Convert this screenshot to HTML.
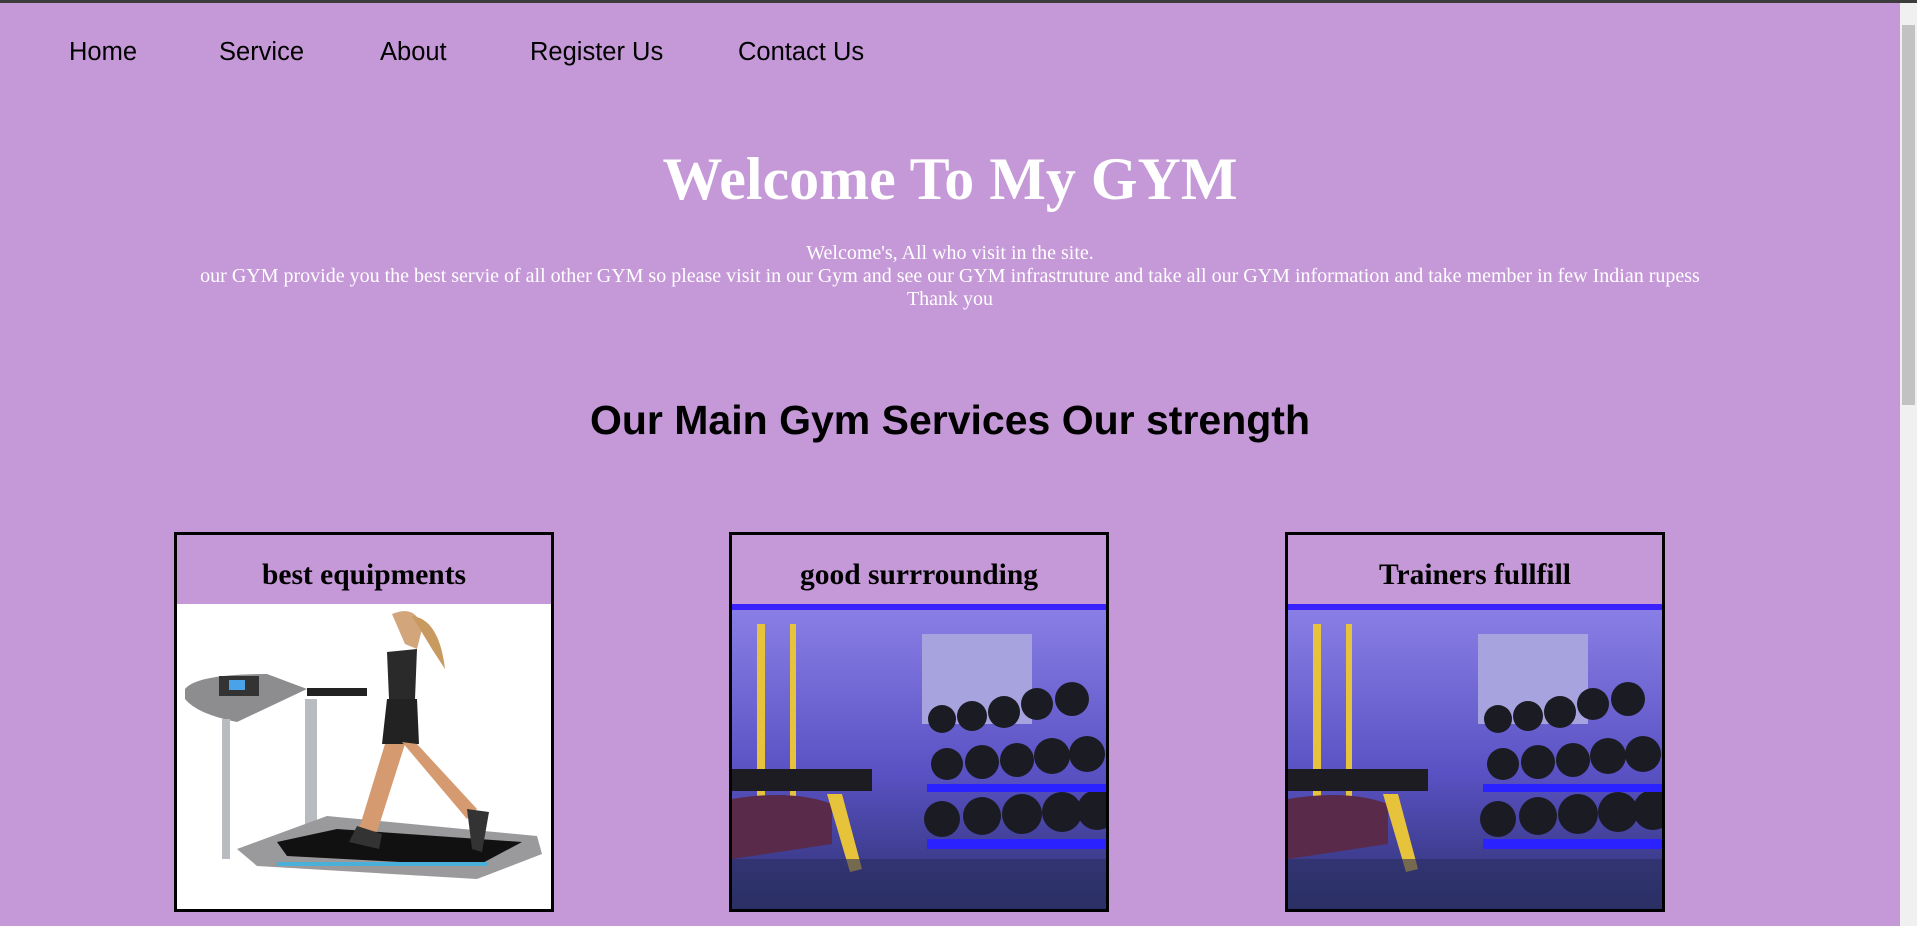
<!DOCTYPE html>
<html><head><meta charset="utf-8"><style>
html,body{margin:0;padding:0;}
body{width:1917px;height:926px;overflow:hidden;background:#c598d7;position:relative;font-family:"Liberation Sans",sans-serif;}
.topbar{position:absolute;left:0;top:0;width:1917px;height:3px;background:#3c3c3c;}
.sb{position:absolute;right:0;top:3px;width:17px;height:923px;background:#f0f0f0;}
.sb .th{position:absolute;left:2px;top:22px;width:13px;height:380px;background:#c2c2c2;}
.nav{position:absolute;top:38px;font-size:25.5px;color:#000;}
h1{position:absolute;left:0;width:1900px;top:145px;margin:0;text-align:center;font-family:"Liberation Serif",serif;font-weight:bold;font-size:60px;color:#fff;}
.p{position:absolute;left:0;width:1900px;top:242px;text-align:center;font-family:"Liberation Serif",serif;font-size:20px;line-height:23px;color:#fff;}
h2{position:absolute;left:0;width:1900px;top:397px;margin:0;text-align:center;font-weight:bold;font-size:41px;color:#000;}
.card{position:absolute;top:532px;width:374px;height:374px;border:3px solid #000;}
.card .t{height:69px;text-align:center;font-family:"Liberation Serif",serif;font-weight:bold;font-size:29.5px;line-height:80px;color:#000;}
.card svg{display:block;width:374px;height:305px;}
</style></head><body>
<div class="topbar"></div>
<div class="sb"><div class="th"></div></div>
<div class="nav" style="left:69px">Home</div>
<div class="nav" style="left:219px">Service</div>
<div class="nav" style="left:380px">About</div>
<div class="nav" style="left:530px">Register Us</div>
<div class="nav" style="left:738px">Contact Us</div>
<h1>Welcome To My GYM</h1>
<div class="p">Welcome's, All who visit in the site.<br>our GYM provide you the best servie of all other GYM so please visit in our Gym and see our GYM infrastruture and take all our GYM information and take member in few Indian rupess<br>Thank you</div>
<h2>Our Main Gym Services Our strength</h2>

<div class="card" style="left:174px"><div class="t">best equipments</div>
<svg viewBox="0 0 374 305"><rect width="374" height="305" fill="#fff"/>
<path d="M8 85 Q20 70 90 70 L130 85 L60 118 Q20 110 8 95Z" fill="#8d8d8f"/>
<rect x="42" y="72" width="40" height="20" fill="#333"/><rect x="52" y="76" width="16" height="10" fill="#4aa3e8"/>
<rect x="130" y="84" width="60" height="8" fill="#222"/>
<rect x="45" y="115" width="8" height="140" fill="#b8bcc0"/><rect x="128" y="95" width="12" height="140" fill="#b8bcc0"/>
<path d="M60 245 L150 212 L360 232 L365 250 L300 275 L80 262Z" fill="#9a9a9c"/>
<path d="M100 238 L160 225 L345 238 L300 262 L110 252Z" fill="#111"/>
<rect x="100" y="258" width="210" height="4" fill="#4ab0d8"/>
<path d="M215 10 Q240 0 245 25 L240 45 L228 40Z" fill="#d2a57a"/><path d="M235 12 Q262 15 268 65 L255 45Z" fill="#c89a60"/>
<path d="M210 48 L240 45 L238 95 L212 95Z" fill="#2a2a2a"/>
<path d="M210 95 L240 95 L242 140 L205 140Z" fill="#222"/>
<path d="M208 140 L228 140 L200 228 L182 225Z" fill="#d59a70"/><path d="M225 138 L240 140 L300 205 L290 215Z" fill="#d59a70"/>
<path d="M180 222 L205 230 L202 245 L172 238Z" fill="#333"/><path d="M290 205 L312 208 L305 248 L295 245Z" fill="#333"/>
</svg></div>

<div class="card" style="left:729px"><div class="t">good surrrounding</div>
<svg viewBox="0 0 374 305"><defs><linearGradient id="g" x1="0" y1="0" x2="0" y2="1"><stop offset="0" stop-color="#8a80e6"/><stop offset="0.55" stop-color="#5a52c4"/><stop offset="1" stop-color="#2d3170"/></linearGradient></defs>
<rect width="374" height="305" fill="url(#g)"/>
<rect x="0" y="0" width="374" height="6" fill="#3a22ff"/>
<rect x="190" y="30" width="110" height="90" fill="#a7a3de"/>
<rect x="25" y="20" width="8" height="230" fill="#e6c33a"/><rect x="58" y="20" width="6" height="180" fill="#e6c33a"/>
<g fill="#1b1b24">
<circle cx="210" cy="115" r="14"/><circle cx="240" cy="112" r="15"/><circle cx="272" cy="108" r="16"/><circle cx="305" cy="100" r="16"/><circle cx="340" cy="95" r="17"/>
<circle cx="215" cy="160" r="16"/><circle cx="250" cy="158" r="17"/><circle cx="285" cy="156" r="17"/><circle cx="320" cy="152" r="18"/><circle cx="355" cy="150" r="18"/>
<circle cx="210" cy="215" r="18"/><circle cx="250" cy="212" r="19"/><circle cx="290" cy="210" r="20"/><circle cx="330" cy="208" r="20"/><circle cx="365" cy="206" r="20"/>
</g>
<rect x="195" y="180" width="179" height="8" fill="#2a22ff"/><rect x="195" y="235" width="179" height="10" fill="#2a22ff"/>
<rect x="0" y="165" width="140" height="22" fill="#1c1c22"/>
<path d="M0 195 Q60 185 100 200 L100 240 L0 255Z" fill="#5a2a4a"/>
<path d="M95 190 L110 190 L130 265 L118 268Z" fill="#e6c33a"/>
<rect x="0" y="255" width="374" height="50" fill="#2a2f5e" opacity="0.6"/>
</svg></div>

<div class="card" style="left:1285px"><div class="t">Trainers fullfill</div>
<svg viewBox="0 0 374 305"><rect width="374" height="305" fill="url(#g)"/>
<rect x="0" y="0" width="374" height="6" fill="#3a22ff"/>
<rect x="190" y="30" width="110" height="90" fill="#a7a3de"/>
<rect x="25" y="20" width="8" height="230" fill="#e6c33a"/><rect x="58" y="20" width="6" height="180" fill="#e6c33a"/>
<g fill="#1b1b24">
<circle cx="210" cy="115" r="14"/><circle cx="240" cy="112" r="15"/><circle cx="272" cy="108" r="16"/><circle cx="305" cy="100" r="16"/><circle cx="340" cy="95" r="17"/>
<circle cx="215" cy="160" r="16"/><circle cx="250" cy="158" r="17"/><circle cx="285" cy="156" r="17"/><circle cx="320" cy="152" r="18"/><circle cx="355" cy="150" r="18"/>
<circle cx="210" cy="215" r="18"/><circle cx="250" cy="212" r="19"/><circle cx="290" cy="210" r="20"/><circle cx="330" cy="208" r="20"/><circle cx="365" cy="206" r="20"/>
</g>
<rect x="195" y="180" width="179" height="8" fill="#2a22ff"/><rect x="195" y="235" width="179" height="10" fill="#2a22ff"/>
<rect x="0" y="165" width="140" height="22" fill="#1c1c22"/>
<path d="M0 195 Q60 185 100 200 L100 240 L0 255Z" fill="#5a2a4a"/>
<path d="M95 190 L110 190 L130 265 L118 268Z" fill="#e6c33a"/>
<rect x="0" y="255" width="374" height="50" fill="#2a2f5e" opacity="0.6"/>
</svg></div>
</body></html>
